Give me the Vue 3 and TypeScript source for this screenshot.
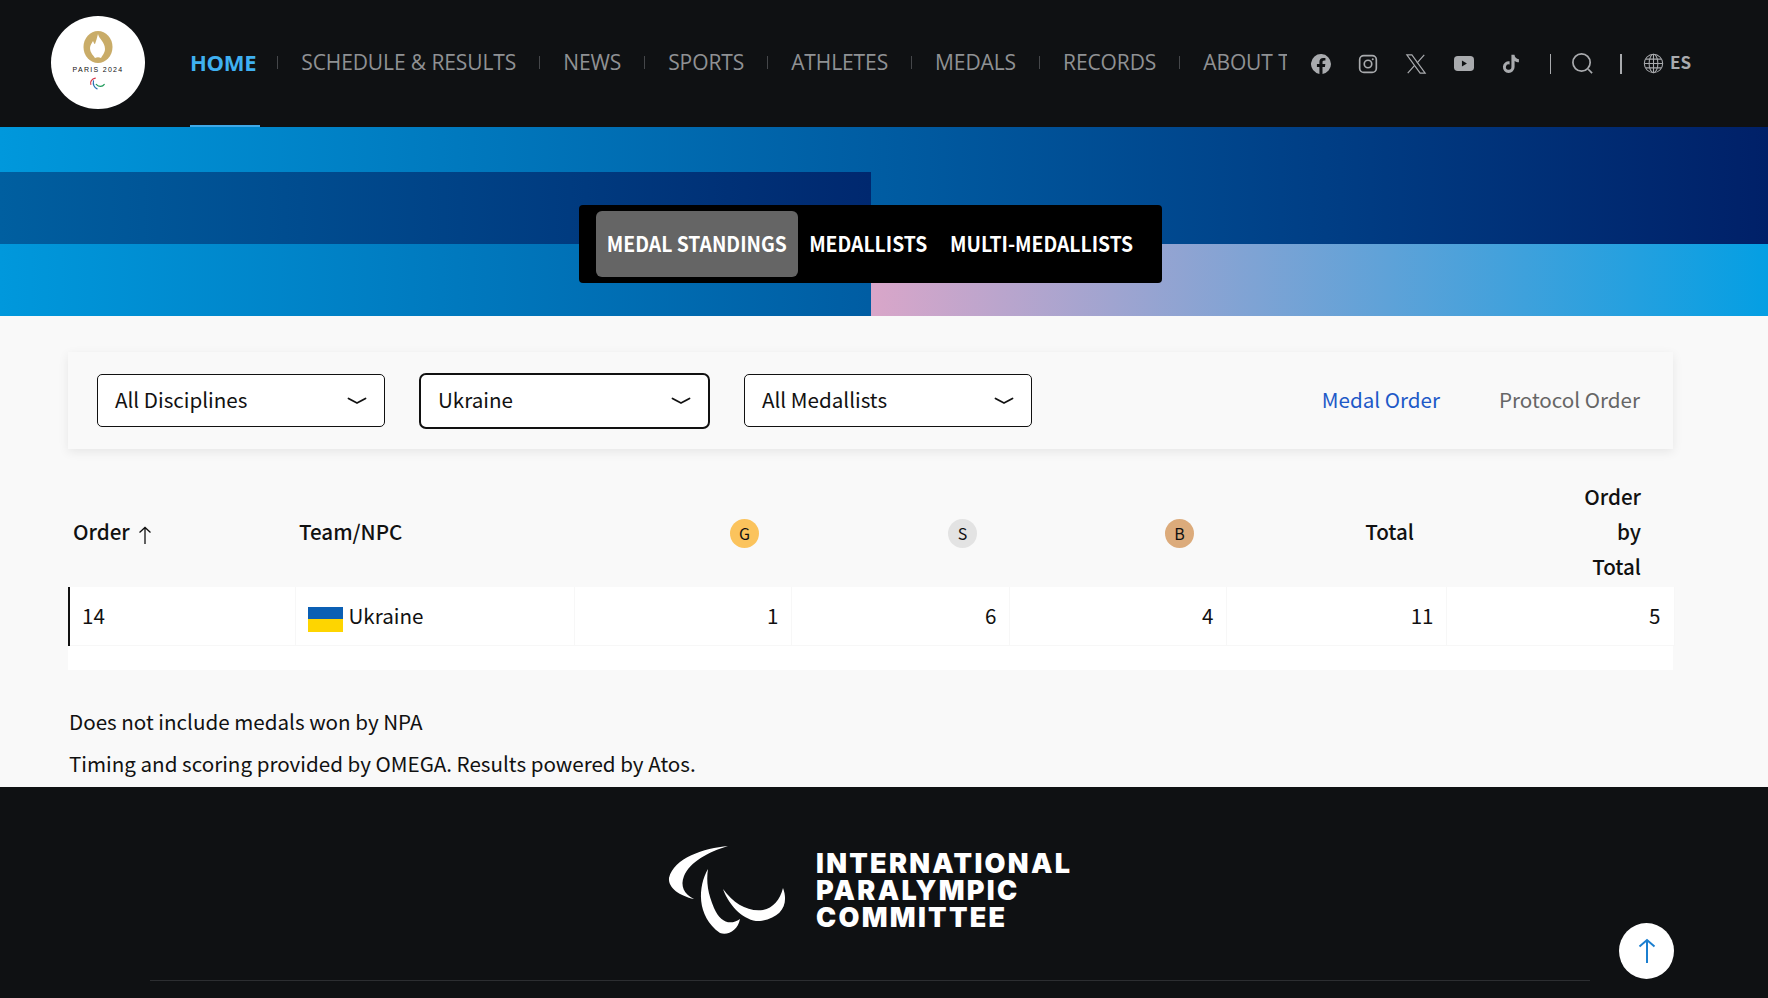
<script setup lang="ts">
const navItems = ['SCHEDULE & RESULTS', 'NEWS', 'SPORTS', 'ATHLETES', 'MEDALS', 'RECORDS', 'ABOUT THE GAMES']
const filters = [
  { label: 'All Disciplines', active: false },
  { label: 'Ukraine', active: true },
  { label: 'All Medallists', active: false },
]
const tabs = [
  { label: 'MEDAL STANDINGS', selected: true },
  { label: 'MEDALLISTS', selected: false },
  { label: 'MULTI-MEDALLISTS', selected: false },
]
const row = { order: 14, team: 'Ukraine', gold: 1, silver: 6, bronze: 4, total: 11, byTotal: 5 }
</script>

<template>
  <div class="page">
    <header class="topbar">
      <div class="logo">
        <svg class="flame" viewBox="0 0 30 32" width="30" height="32">
          <ellipse cx="15" cy="16" rx="14.500" ry="16" fill="#c9ac68" />
          <path d="M15 3c1 5 7 8 7 15 0 4-3 7-4 9-2-1-4-1-6 0-1-2-5-5-5-10 0-3 2-5 3-7 1 2 1 3 2 3 1-3 2-6 3-10z" fill="#fff" />
        </svg>
        <span class="logo-text">PARIS 2024</span>
        <svg class="agitos" viewBox="0 0 20 14" width="18" height="13" fill="none" stroke-width="1.300" stroke-linecap="round">
          <path d="M7 1C3 2 1 5 2 8" stroke="#d8374a" />
          <path d="M5 4c-1 4 1 8 4 9" stroke="#2a6fb4" />
          <path d="M8 8c3 3 7 3 9 0" stroke="#1f9a5a" />
        </svg>
      </div>
      <div class="nav-clip">
        <nav class="nav">
          <a class="nav-link home">HOME</a>
          <template v-for="item in navItems" :key="item">
            <i class="nav-sep"></i>
            <a class="nav-link">{{ item }}</a>
          </template>
        </nav>
      </div>
      <div class="social">
        <svg viewBox="0 0 24 24" width="20" height="20"><path fill="#a9abae" d="M24 12a12 12 0 1 0-13.900 11.900v-8.400H7.100V12h3V9.400c0-3 1.800-4.700 4.500-4.700 1.300 0 2.700.2 2.700.2v3h-1.500c-1.500 0-2 .9-2 1.900V12h3.400l-.5 3.500h-2.900v8.400A12 12 0 0 0 24 12z" /></svg>
        <svg viewBox="0 0 24 24" width="20" height="20" fill="none" stroke="#a9abae" stroke-width="2"><rect x="2" y="2" width="20" height="20" rx="5" /><circle cx="12" cy="12" r="4.500" /><circle cx="17.700" cy="6.300" r="1.200" fill="#a9abae" stroke="none" /></svg>
        <svg viewBox="0 0 24 24" width="22" height="22" fill="none" stroke="#a9abae" stroke-width="1.300"><path d="M2 2h5.500L22 22h-5.500z" /><path d="M21 2l-8 9M10.500 13.500L3 22" /></svg>
        <svg viewBox="0 0 24 18" width="20" height="15"><rect width="24" height="18" rx="4.500" fill="#a9abae" /><path d="M9.500 5.500v7l6-3.500z" fill="#0f1113" /></svg>
        <svg viewBox="0 0 24 24" width="20" height="20"><path fill="#a9abae" d="M12.500 1h3.700c.2 3 2.200 5 5.300 5.300V10c-2 0-3.700-.6-5.200-1.700v7.400a7 7 0 1 1-6-6.900v3.800a3.300 3.300 0 1 0 2.200 3.100z" /></svg>
      </div>
      <i class="bar bar-a"></i>
      <svg class="search" viewBox="0 0 24 24" width="23" height="23" fill="none" stroke="#a9abae" stroke-width="1.800"><circle cx="11" cy="11" r="9" /><path d="M18 18l4 4" /></svg>
      <i class="bar bar-b"></i>
      <svg class="globe" viewBox="0 0 24 24" width="21" height="21" fill="none" stroke="#a9abae" stroke-width="1.200"><circle cx="12" cy="12" r="10.500" /><ellipse cx="12" cy="12" rx="5" ry="10.500" /><path d="M12 1.500v21M1.500 12h21M3 7h18M3 17h18" /></svg>
      <span class="lang">ES</span>
    </header>

    <section class="hero">
      <div class="hero-band"></div>
      <div class="hero-pink"></div>
      <div class="tabs">
        <a v-for="t in tabs" :key="t.label" class="tab" :class="{ selected: t.selected }"><span>{{ t.label }}</span></a>
      </div>
    </section>

    <main class="content">
      <div class="filter-card">
        <div v-for="f in filters" :key="f.label" class="select" :class="{ active: f.active }">
          <span>{{ f.label }}</span>
          <svg viewBox="0 0 20 8" width="20" height="8" fill="none" stroke="#111" stroke-width="1.800" stroke-linecap="round"><path d="M1.500 1.500c3 1.500 5 3 8.500 4.500 3.500-1.500 5.500-3 8.500-4.500" /></svg>
        </div>
        <div class="orders">
          <a class="order-link on">Medal Order</a>
          <a class="order-link">Protocol Order</a>
        </div>
      </div>

      <div class="table-wrap">
        <table class="medals">
          <thead>
            <tr>
              <th class="left">Order <svg class="sort" viewBox="0 0 14 18" width="14" height="18" fill="none" stroke="#111" stroke-width="1.300"><path d="M7 18V1.500M1.500 6.500L7 1.500l5.500 5" /></svg></th>
              <th class="left">Team/NPC</th>
              <th class="medal"><span class="dot gold">G</span></th>
              <th class="medal"><span class="dot silver">S</span></th>
              <th class="medal"><span class="dot bronze">B</span></th>
              <th class="right">Total</th>
              <th class="right">Order<br />by<br />Total</th>
            </tr>
          </thead>
          <tbody>
            <tr>
              <td class="first">{{ row.order }}</td>
              <td><span class="team"><span class="flag"></span>{{ row.team }}</span></td>
              <td class="num">{{ row.gold }}</td>
              <td class="num">{{ row.silver }}</td>
              <td class="num">{{ row.bronze }}</td>
              <td class="num">{{ row.total }}</td>
              <td class="num">{{ row.byTotal }}</td>
            </tr>
          </tbody>
        </table>
        <div class="table-foot"></div>
      </div>

      <p class="note first-note">Does not include medals won by NPA</p>
      <p class="note">Timing and scoring provided by OMEGA. Results powered by Atos.</p>
    </main>

    <footer class="footer">
      <div class="ipc">
        <svg viewBox="0 0 120 90" width="120" height="90" fill="#fff">
          <path d="M60 0C36 2 6 12 1 32c-1 10 11 18 25 21-10-5-14-13-10-23C22 16 40 6 60 0z" />
          <path d="M40 23c-10 17-12 47 12 64 8 3 18-3 20-14-10 7-20 3-26-11-6-14-8-26-6-39z" />
          <path d="M55 43c11 15 25 23 40 21 10-2 17-10 20-22 6 16-1 30-23 33-14 1-30-13-37-32z" />
        </svg>
        <div class="ipc-text">INTERNATIONAL<br />PARALYMPIC<br />COMMITTEE</div>
      </div>
      <div class="footer-line"></div>
      <button class="to-top">
        <svg viewBox="0 0 18 26" width="18" height="26" fill="none" stroke="#1b7fd0" stroke-width="2"><path d="M9 25V2M1.500 8.500L9 2l7.500 6.500" /></svg>
      </button>
    </footer>
  </div>
</template>

<style>
html, body {
  margin: 0;
  background: #f9f9f9;
}
</style>

<style scoped>
.page {
  width: 1768px;
  height: 998px;
  overflow: hidden;
  font-family: "Noto Sans CJK JP", "Noto Sans", sans-serif;
  color: #111;
  background: #f9f9f9;
}

.topbar {
  height: 127px;
  background: #0f1113;
  display: flex;
  align-items: center;
  padding-left: 51px;
  box-sizing: border-box;
}
.logo {
  width: 94px;
  height: 93px;
  margin-top: -3px;
  border-radius: 50%;
  background: #fff;
  display: flex;
  flex-direction: column;
  align-items: center;
  padding-top: 15px;
  box-sizing: border-box;
  flex-shrink: 0;
}
.logo-text {
  font-family: "Liberation Sans", sans-serif;
  font-size: 7px;
  letter-spacing: 1.300px;
  margin-top: 3px;
  line-height: 8px;
  color: #111;
  white-space: nowrap;
}
.agitos { margin-top: 3px; }

.nav-clip {
  width: 1097px;
  margin-left: 45px;
  overflow: hidden;
  align-self: stretch;
  flex-shrink: 0;
}
.nav {
  height: 127px;
  display: flex;
  align-items: flex-start;
  white-space: nowrap;
}
.nav-link {
  font-family: "Open Sans", sans-serif;
  font-size: 21px;
  letter-spacing: -0.1px;
  line-height: 125px;
  color: #8f9194;
  flex-shrink: 0;
}
.nav-link.home {
  color: #3fb0f0;
  font-size: 22px;
  font-weight: 700;
  letter-spacing: -0.3px;
  position: relative;
  height: 127px;
  display: block;
  margin-right: -2px;
}
.nav-link.home::after {
  content: "";
  position: absolute;
  left: 0;
  right: -4px;
  bottom: 0;
  height: 2px;
  background: #3fa9e8;
}
.nav-sep {
  width: 1px;
  height: 13px;
  flex-shrink: 0;
  background: #45474a;
  margin: 56px 23px 0;
}

.social {
  display: flex;
  align-items: center;
  gap: 27px;
  margin-left: 24px;
}
.bar {
  width: 1px;
  height: 20px;
  background: #a9abae;
}
.bar-a { margin-left: 29px; }
.bar-b { margin-left: 26px; width: 2px; }
.search { margin-left: 20px; }
.globe { margin-left: 21px; }
.lang {
  font-size: 17px;
  font-weight: 700;
  color: #a9abae;
  margin-left: 6px;
  margin-top: -5px;
}

.hero {
  position: relative;
  height: 189px;
  background: linear-gradient(90deg, #0098dc 0%, #002068 100%);
}
.hero-band {
  position: absolute;
  left: 0;
  top: 45px;
  width: 871px;
  height: 72px;
  background: linear-gradient(90deg, #005fa0 0%, #00286f 100%);
}
.hero-pink {
  position: absolute;
  left: 871px;
  right: 0;
  top: 117px;
  bottom: 0;
  background: linear-gradient(90deg, #d9a6c9 0%, #049fe3 100%);
}
.tabs {
  position: absolute;
  left: 579px;
  top: 78px;
  width: 583px;
  height: 78px;
  box-sizing: border-box;
  padding: 6px 0 0 17px;
  background: #000;
  border-radius: 4px;
  display: flex;
}
.tab {
  height: 66px;
  display: flex;
  align-items: center;
  justify-content: center;
  box-sizing: border-box;
  padding-bottom: 2px;
  font-size: 21px;
  font-weight: 700;
  color: #fff;
  border-radius: 6px;
  white-space: nowrap;
}
.tab:nth-child(1) { width: 202px; }
.tab:nth-child(2) { width: 141px; }
.tab:nth-child(3) { width: 205px; }
/* the original face is condensed, nothing installed is */
.tab span {
  display: inline-block;
  transform: scaleX(0.92);
}
.tab.selected { background: #656565; }

.content {
  height: 471px;
  padding: 36px 0 0 68px;
  box-sizing: border-box;
}
.filter-card {
  width: 1605px;
  height: 97px;
  box-sizing: border-box;
  padding: 0 33px 0 29px;
  background: #f9f9f9;
  box-shadow: 0 3px 10px rgba(0, 0, 0, 0.08);
  display: flex;
  align-items: center;
  gap: 34px;
}
.select {
  width: 288px;
  height: 53px;
  box-sizing: border-box;
  border: 1px solid #111;
  border-radius: 5px;
  background: #fff;
  display: flex;
  align-items: center;
  justify-content: space-between;
  padding: 0 17px;
  font-size: 20.600px;
}
.select span { margin-top: -4px; }
.select.active {
  width: 291px;
  height: 56px;
  border-width: 2px;
  border-radius: 7px;
}
.orders {
  margin-left: auto;
  display: flex;
  gap: 59px;
  font-size: 20.600px;
  margin-top: -4px;
}
.order-link { color: #666; }
.order-link.on { color: #1e5ac8; }

.table-wrap {
  width: 1605px;
  margin-top: 26px;
}
.medals {
  width: 100%;
  border-collapse: collapse;
  table-layout: fixed;
}
.medals th {
  height: 112px;
  box-sizing: border-box;
  padding: 0 32px 0 4px;
  font-size: 20.600px;
  font-weight: 500;
  line-height: 35px;
  text-align: right;
}
.medals th.left { text-align: left; }
.medals th:last-child { padding-right: 33px; }
.sort { vertical-align: -4px; margin-left: 4px; }
.dot {
  display: inline-flex;
  align-items: center;
  justify-content: center;
  width: 29px;
  height: 29px;
  border-radius: 50%;
  font-size: 16px;
  line-height: 29px;
  font-weight: 400;
}
.gold { background: #fbc35c; }
.silver { background: #e3e3e3; }
.bronze { background: #dcab7b; }

.medals td {
  height: 58px;
  padding: 0 12px 2px;
  background: #fff;
  font-size: 20.600px;
  border-right: 1px solid #f7f7f7;
  border-bottom: 1px solid #f7f7f7;
  box-sizing: border-box;
}
.medals td.first { border-left: 2px solid #111; }
.medals td.num { text-align: right; }
.medals td:last-child { padding-right: 13px; }
.medals th:nth-child(1) { width: 226px; }
.medals th:nth-child(2) { width: 279px; }
.medals th:nth-child(3) { width: 217px; }
.medals th:nth-child(4) { width: 218px; }
.medals th:nth-child(5) { width: 217px; }
.medals th:nth-child(6) { width: 220px; }
.medals th:nth-child(7) { width: 228px; }
.team {
  display: flex;
  align-items: center;
  gap: 6px;
}
.flag {
  width: 35px;
  height: 25px;
  margin-top: 9px;
  background: linear-gradient(180deg, #0a5fb4 50%, #fed500 50%);
}
.table-foot {
  height: 24px;
  background: #fff;
}
.note {
  margin: 26px 0 0 1px;
  font-size: 20.600px;
  line-height: 28px;
}
.note.first-note { margin-top: 37px; }
.note + .note { margin-top: 14px; }

.footer {
  position: relative;
  height: 211px;
  background: #0f1113;
}
.ipc {
  position: absolute;
  left: 668px;
  top: 59px;
  display: flex;
  align-items: center;
  gap: 28px;
}
.ipc-text {
  font-family: "Inter", sans-serif;
  font-size: 27px;
  line-height: 27px;
  font-weight: 900;
  letter-spacing: 2.300px;
  margin-bottom: 2px;
  color: #fff;
}
.footer-line {
  position: absolute;
  left: 150px;
  width: 1440px;
  top: 193px;
  height: 1px;
  background: #2c2e31;
}
.to-top {
  position: absolute;
  left: 1619px;
  top: 136px;
  width: 55px;
  height: 56px;
  border: 0;
  border-radius: 50%;
  background: #fff;
  padding: 0;
  display: flex;
  align-items: center;
  justify-content: center;
}
</style>
